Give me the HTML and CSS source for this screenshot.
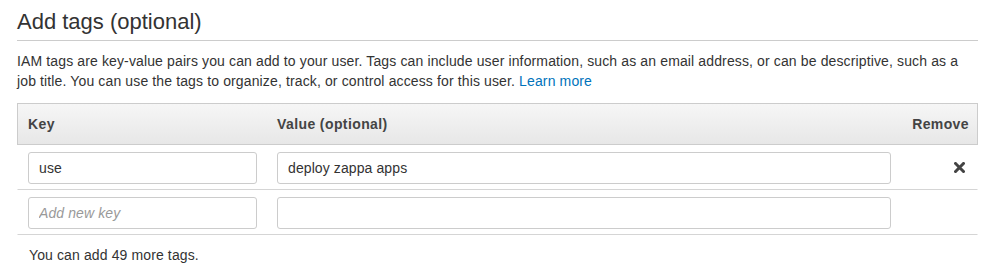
FILE: index.html
```html
<!DOCTYPE html>
<html lang="en">
<head>
    <meta charset="UTF-8">
    <meta name="viewport" content="width=device-width, initial-scale=1.0">
    <title>Add tags</title>
    <link rel="stylesheet" href="styles.css">
</head>
<body>

    <div class="section">
        <h2>Add tags (optional)</h2>
        <p class="intro">IAM tags are key-value pairs you can add to your user. Tags can include user information, such as an email address, or can be descriptive, such as a job title. You can use the tags to organize, track, or control access for this user. <a href="#">Learn more</a></p>

        <div class="tags">
            <div class="tag-row tag-head">
                <div class="cell">Key</div>
                <div class="cell">Value (optional)</div>
                <div class="cell remove">Remove</div>
            </div>
            <div class="tag-row">
                <div class="cell"><input type="text" value="use"></div>
                <div class="cell"><input type="text" value="deploy zappa apps"></div>
                <div class="cell remove">
                    <button class="remove-btn" title="Remove">
                        <svg width="11" height="11" viewBox="0 0 11 11">
                            <path d="M1.5 1.5 L9.5 9.5 M9.5 1.5 L1.5 9.5" stroke="#444" stroke-width="3" stroke-linecap="square" fill="none"/>
                        </svg>
                    </button>
                </div>
            </div>
            <div class="tag-row">
                <div class="cell"><input type="text" placeholder="Add new key"></div>
                <div class="cell"><input type="text"></div>
                <div class="cell remove"></div>
            </div>
        </div>

        <p class="note">You can add 49 more tags.</p>
    </div>

</body>
</html>
```

FILE: styles.css
```css
body {
    font-family: "Liberation Sans", Arial, sans-serif;
    font-size: 14px;
    line-height: 20px;
    color: #333;
    background: white;
    margin: 0;
    padding: 0;
}

.section {
    width: 961px;
    margin-left: 17px;
    padding-top: 8px;
}

h2 {
    font-size: 22px;
    font-weight: normal;
    line-height: 28px;
    color: #333;
    margin: 0;
    padding-bottom: 4px;
    border-bottom: 1px solid #ccc;
}

.intro {
    margin: 10px 0 12px;
    letter-spacing: 0.13px;
}

.intro a {
    color: #0073bb;
    text-decoration: none;
}

.tag-row {
    display: grid;
    grid-template-columns: 249px 634px 76px;
    border-left: 1px solid transparent;
    border-right: 1px solid transparent;
    border-bottom: 1px solid #d5d5d5;
}

.tag-head {
    height: 40px;
    align-items: center;
    border: 1px solid #ccc;
    background: linear-gradient(#f6f6f6, #e7e7e7);
    font-weight: bold;
    color: #444;
    letter-spacing: 0.4px;
}

.cell {
    padding: 0 10px;
}

.tag-row .cell {
    padding-top: 7px;
    padding-bottom: 5px;
}

.tag-head .cell {
    padding-top: 0;
    padding-bottom: 0;
}

.tag-head .remove {
    text-align: right;
    padding-right: 8px;
}

.remove {
    text-align: right;
    padding-right: 12px;
}

input {
    box-sizing: border-box;
    width: 100%;
    height: 32px;
    margin: 0;
    padding: 0 10px;
    border: 1px solid #ccc;
    border-radius: 3px;
    font-family: inherit;
    font-size: 14px;
    letter-spacing: 0.1px;
    color: #333;
    background: white;
}

input::placeholder {
    font-style: italic;
    color: #999;
}

.remove-btn {
    background: none;
    border: none;
    padding: 0;
    margin-top: 10px;
    cursor: pointer;
}

.remove-btn svg {
    display: block;
}

.note {
    margin: 10px 0 0 12px;
    letter-spacing: 0.12px;
}
```
